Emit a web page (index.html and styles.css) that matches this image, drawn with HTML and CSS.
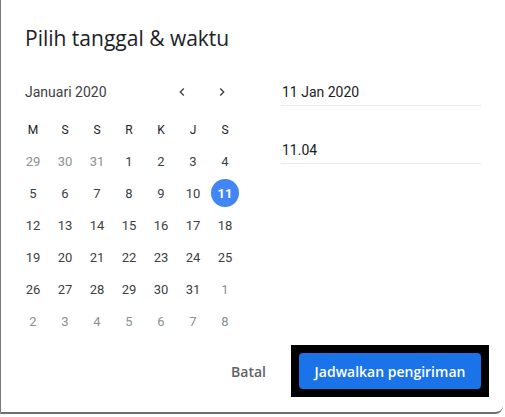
FILE: index.html
```html
<!DOCTYPE html>
<html lang="id">
<head>
<meta charset="utf-8">
<title>Pilih tanggal &amp; waktu</title>
<link rel="stylesheet" href="styles.css">
</head>
<body>
<div class="dialog">
  <h1 class="title">Pilih tanggal &amp; waktu</h1>
  <div class="content">
    <div class="calendar">
      <div class="cal-head">
        <span class="month">Januari 2020</span>
        <div class="nav">
          <button class="nav-btn" aria-label="Bulan sebelumnya"><svg width="16" height="16" viewBox="0 0 24 24"><path d="M15.41 7.41L14 6l-6 6 6 6 1.41-1.41L10.83 12z"/></svg></button>
          <button class="nav-btn" aria-label="Bulan berikutnya"><svg width="16" height="16" viewBox="0 0 24 24"><path d="M8.59 16.59L10 18l6-6-6-6-1.41 1.41L13.17 12z"/></svg></button>
        </div>
      </div>
      <div class="weekdays">
        <span>M</span><span>S</span><span>S</span><span>R</span><span>K</span><span>J</span><span>S</span>
      </div>
      <div class="days">
        <span class="dim">29</span><span class="dim">30</span><span class="dim">31</span><span>1</span><span>2</span><span>3</span><span>4</span>
        <span>5</span><span>6</span><span>7</span><span>8</span><span>9</span><span>10</span><span class="sel"><b>11</b></span>
        <span>12</span><span>13</span><span>14</span><span>15</span><span>16</span><span>17</span><span>18</span>
        <span>19</span><span>20</span><span>21</span><span>22</span><span>23</span><span>24</span><span>25</span>
        <span>26</span><span>27</span><span>28</span><span>29</span><span>30</span><span>31</span><span class="dim">1</span>
        <span class="dim">2</span><span class="dim">3</span><span class="dim">4</span><span class="dim">5</span><span class="dim">6</span><span class="dim">7</span><span class="dim">8</span>
      </div>
    </div>
    <div class="fields">
      <div class="field">11 Jan 2020</div>
      <div class="field field-time">11.04</div>
    </div>
  </div>
  <div class="actions">
    <button class="btn-text">Batal</button>
    <div class="frame"><button class="btn-primary">Jadwalkan pengiriman</button></div>
  </div>
</div>
</body>
</html>
```
FILE: styles.css
```css
* { box-sizing: border-box; }
html, body { margin: 0; padding: 0; }
body {
  background: #fff;
  font-family: Roboto, "Liberation Sans", sans-serif;
  color: #3c4043;
  width: 505px;
  height: 417px;
  overflow: hidden;
}
.dialog {
  width: 503px;
  height: 414px;
  background: #fff;
  border-left: 1px solid #7a7a7a;
  border-bottom: 2px solid #6f6f6f;
  border-bottom-right-radius: 8px;
}
.title {
  margin: 0;
  padding: 24px 0 0 24px;
  font-family: "Open Sans", sans-serif;
  font-weight: 400;
  font-size: 21px;
  line-height: 28px;
  color: #202124;
}
.content {
  display: flex;
  margin-top: 20px;
  padding-left: 16px;
}
.calendar { width: 224px; }
.cal-head {
  display: flex;
  align-items: center;
  height: 40px;
}
.month {
  padding-left: 8px;
  font-size: 14px;
  color: #3c4043;
}
.nav { margin-left: auto; display: flex; }
.nav-btn {
  width: 40px;
  height: 40px;
  border: 0;
  padding: 0 0 0 2px;
  background: transparent;
  display: flex;
  align-items: center;
  justify-content: center;
}
.nav-btn svg { fill: #3c4043; }
.weekdays, .days {
  display: grid;
  grid-template-columns: repeat(7, 32px);
}
.weekdays {
  margin-top: 3px;
  grid-auto-rows: 30px;
  font-size: 12px;
  font-weight: 400;
  color: #202124;
}
.days {
  grid-auto-rows: 32px;
  font-size: 13px;
  color: #3c4043;
}
.weekdays span, .days span {
  display: flex;
  align-items: center;
  justify-content: center;
}
.days .dim { color: #8a8f94; }
.days .sel b {
  width: 28px;
  height: 28px;
  border-radius: 50%;
  background: #4285f4;
  color: #fff;
  font-weight: 700;
  display: flex;
  align-items: center;
  justify-content: center;
}
.fields {
  margin-left: 40px;
  margin-top: 8px;
  width: 200px;
}
.field {
  height: 26px;
  line-height: 25px;
  padding-left: 1px;
  font-size: 14px;
  color: #202124;
  border-bottom: 1px solid #e8eaed;
}
.field-time { margin-top: 32px; }
.actions {
  display: flex;
  justify-content: flex-end;
  align-items: center;
  margin-top: 8px;
  padding-right: 14px;
}
.btn-text {
  height: 36px;
  padding: 0 24px;
  margin-right: 1px;
  border: 0;
  background: transparent;
  font-family: "Open Sans", sans-serif;
  font-weight: 600;
  font-size: 14px;
  color: #5f6368;
}
.frame {
  background: #000;
  padding: 8px;
}
.btn-primary {
  display: block;
  width: 182px;
  height: 36px;
  border: 0;
  border-radius: 4px;
  background: #1a73e8;
  color: #fff;
  font-family: "Open Sans", sans-serif;
  font-weight: 600;
  font-size: 14px;
}
```
